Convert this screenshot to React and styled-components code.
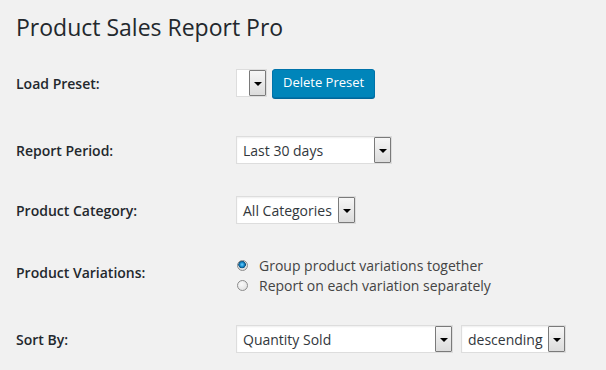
import React from "react";
import styled, { createGlobalStyle } from "styled-components";

const GlobalStyle = createGlobalStyle`
  html, body {
    margin: 0;
    padding: 0;
    background: #f1f1f1;
  }
  body {
    font-family: "Open Sans", "Noto Sans", sans-serif;
    color: #444;
  }
`;

function Select({ value, width }) {
  return (
    <SelectBox $width={width}>
      <SelectText>{value}</SelectText>
      <Arrow>
        <ArrowGlyph />
      </Arrow>
    </SelectBox>
  );
}

function Radio({ checked, label }) {
  return (
    <RadioRow>
      <RadioDot $checked={checked} />
      <RadioLabel>{label}</RadioLabel>
    </RadioRow>
  );
}

function App() {
  return (
    <>
      <GlobalStyle />
      <Wrap>
        <Title>Product Sales Report Pro</Title>

        <Row $height={60}>
          <Label>Load Preset:</Label>
          <Field>
            <PresetSelect>
              <PresetBlank />
              <Arrow>
                <ArrowGlyph />
              </Arrow>
            </PresetSelect>
            <PrimaryButton>Delete Preset</PrimaryButton>
          </Field>
        </Row>

        <Row $height={60} $top={7}>
          <Label>Report Period:</Label>
          <Field>
            <Select value="Last 30 days" width={156} />
          </Field>
        </Row>

        <Row $height={60}>
          <Label>Product Category:</Label>
          <Field>
            <Select value="All Categories" width={120} />
          </Field>
        </Row>

        <Row $height={70} $align="flex-start">
          <Label $pad={23}>Product Variations:</Label>
          <RadioList>
            <Radio checked label="Group product variations together" />
            <Radio label="Report on each variation separately" />
          </RadioList>
        </Row>

        <Row $height={58}>
          <Label>Sort By:</Label>
          <Field $gap={8}>
            <Select value="Quantity Sold" width={217} />
            <Select value="descending" width={105} />
          </Field>
        </Row>
      </Wrap>
    </>
  );
}

export default App;

const Wrap = styled.div`
  padding: 0 16px;
`;

const Title = styled.h1`
  margin: 0;
  padding: 13px 0 0;
  height: 40px;
  font-size: 23px;
  font-weight: 400;
  line-height: 29px;
  color: #23282d;
`;

const Row = styled.div`
  display: flex;
  align-items: ${(p) => p.$align || "center"};
  height: ${(p) => p.$height}px;
  margin-top: ${(p) => p.$top || 0}px;
`;

const Label = styled.div`
  width: 220px;
  flex-shrink: 0;
  font-size: 14px;
  font-weight: 600;
  color: #23282d;
  padding-top: ${(p) => p.$pad || 0}px;
`;

const Field = styled.div`
  display: flex;
  align-items: center;
  gap: ${(p) => p.$gap || 9}px;
`;

const SelectBox = styled.div`
  box-sizing: border-box;
  width: ${(p) => p.$width}px;
  height: 28px;
  display: flex;
  align-items: center;
  justify-content: space-between;
  background: #fff;
  border: 1px solid #ddd;
  box-shadow: inset 0 1px 2px rgba(0, 0, 0, 0.07);
  padding-left: 6px;
`;

const SelectText = styled.span`
  font-size: 14px;
  color: #32373c;
  white-space: nowrap;
`;

const Arrow = styled.span`
  box-sizing: border-box;
  width: 17px;
  height: 26px;
  display: flex;
  align-items: center;
  justify-content: center;
  border: 1px solid #7a7a7a;
  border-radius: 1px;
  background: linear-gradient(#f6f6f6, #dcdcdc);
  flex-shrink: 0;
`;

const ArrowGlyph = styled.span`
  width: 0;
  height: 0;
  border-left: 4px solid transparent;
  border-right: 4px solid transparent;
  border-top: 4px solid #000;
  margin-top: 1px;
`;

const PresetSelect = styled.div`
  box-sizing: border-box;
  width: 31px;
  height: 28px;
  display: flex;
  align-items: center;
  justify-content: flex-end;
  background: #fff;
  border: 1px solid #ddd;
  margin-right: -4px;
`;

const PresetBlank = styled.span`
  flex: 1;
`;

const PrimaryButton = styled.button`
  box-sizing: border-box;
  height: 29px;
  padding: 0 10px 2px;
  font-family: "Open Sans", sans-serif;
  font-size: 13px;
  color: #fff;
  background: #0085ba;
  border: 1px solid #0073aa;
  border-radius: 3px;
  box-shadow: 0 1px 0 #006799;
  cursor: pointer;
`;

const RadioList = styled.div`
  display: flex;
  flex-direction: column;
  gap: 1px;
  padding-top: 16px;
  padding-left: 1px;
`;

const RadioRow = styled.label`
  display: flex;
  align-items: center;
  gap: 11px;
  height: 19px;
`;

const RadioDot = styled.span`
  box-sizing: border-box;
  width: 11px;
  height: 11px;
  border-radius: 50%;
  border: 1px solid #8c8c8c;
  background: ${(p) =>
    p.$checked
      ? "radial-gradient(circle at 45% 40%, #6fd0ff 0, #1a8fd0 2px, #0b4d7a 3.5px, #e6e6e6 4px, #d2d2d2 100%)"
      : "radial-gradient(circle at 40% 35%, #fafafa 0, #dcdcdc 100%)"};
`;

const RadioLabel = styled.span`
  font-size: 14px;
  color: #444;
`;
